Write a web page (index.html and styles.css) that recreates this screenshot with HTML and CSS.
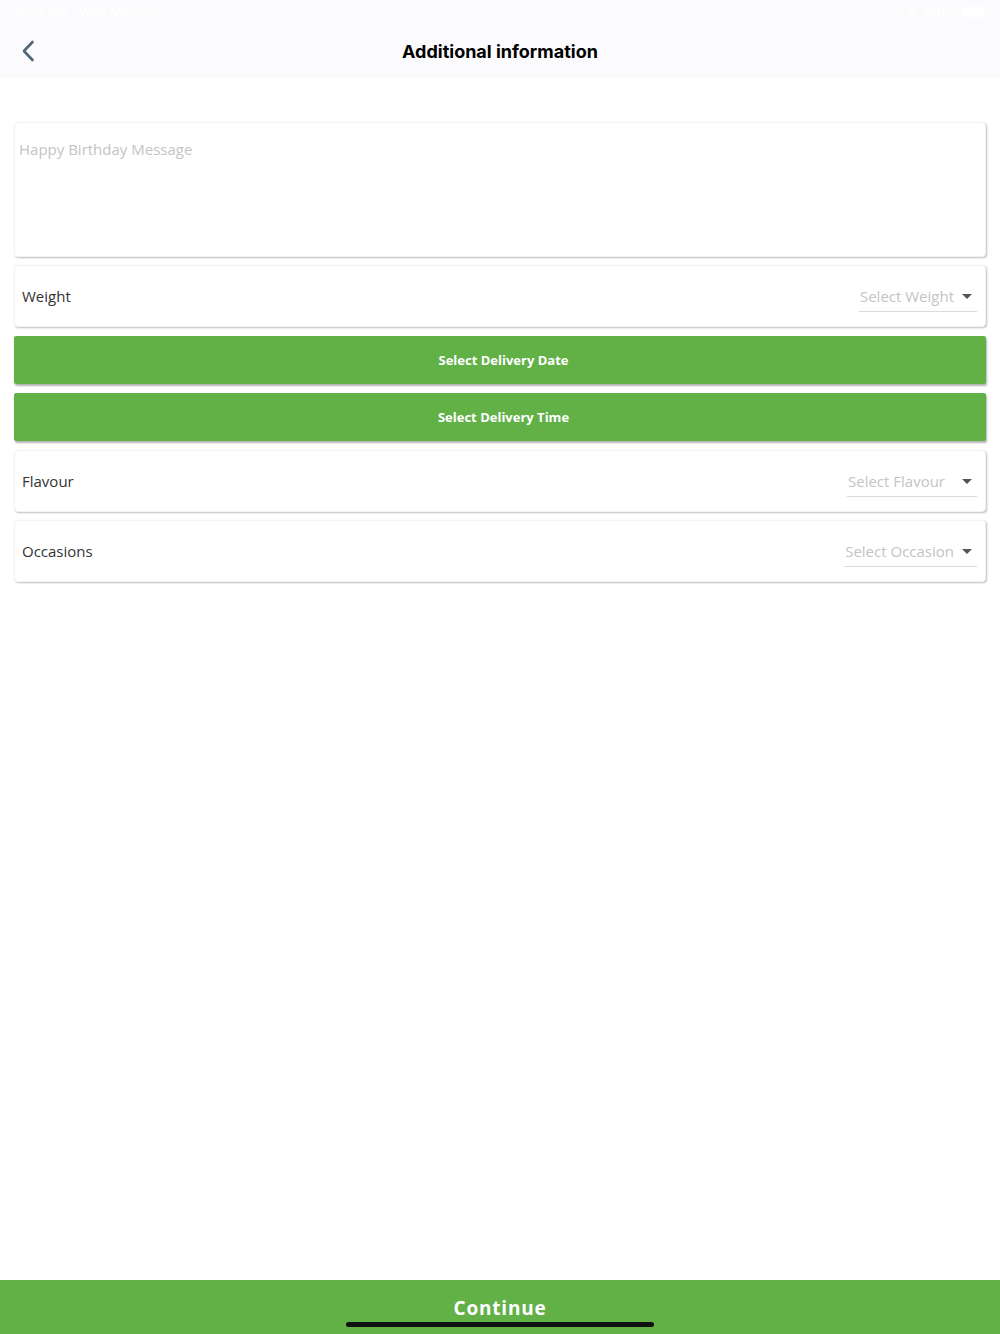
FILE: index.html
```html
<!DOCTYPE html>
<html lang="en">

<head>
  <meta charset="UTF-8">
  <meta name="viewport" content="width=device-width, initial-scale=1.0">
  <title>Additional information</title>
  <link rel="stylesheet" href="styles.css">
</head>

<body>
  <div class="app">
    <div class="topbar">
      <div class="status">
        <span>9:02 PM&nbsp;&nbsp;&nbsp;Wed May 20</span>
        <span class="status-right">
          <svg width="14" height="10" viewBox="0 0 14 10"><path d="M7 9.5 L4.6 7 A3.4 3.4 0 0 1 9.4 7 Z M2.6 5 A6.2 6.2 0 0 1 11.4 5 L10.2 6.2 A4.5 4.5 0 0 0 3.8 6.2 Z M0.6 3 A9 9 0 0 1 13.4 3 L12.2 4.2 A7.3 7.3 0 0 0 1.8 4.2 Z" fill="#fff"/></svg>
          100%
          <span class="battery"></span>
        </span>
      </div>
      <div class="header">
        <svg class="back" width="14" height="22" viewBox="0 0 14 22"><path d="M11.5 2 L3 11 L11.5 20" fill="none" stroke="#4f6675" stroke-width="2.6" stroke-linecap="round" stroke-linejoin="round"/></svg>
        <div class="title">Additional information</div>
      </div>
    </div>

    <div class="form">
      <div class="card message">Happy Birthday Message</div>

      <div class="card row">
        <div class="label">Weight</div>
        <div class="select">Select Weight<span class="caret"></span></div>
      </div>

      <div class="btn">Select Delivery Date</div>
      <div class="btn">Select Delivery Time</div>

      <div class="card row after-btn">
        <div class="label">Flavour</div>
        <div class="select">Select Flavour<span class="caret wide"></span></div>
      </div>

      <div class="card row">
        <div class="label">Occasions</div>
        <div class="select">Select Occasion<span class="caret"></span></div>
      </div>
    </div>

    <div class="footer">
      <div class="continue">Continue</div>
      <div class="home-bar"></div>
    </div>
  </div>
</body>

</html>
```

FILE: styles.css
```css
body {
  margin: 0;
  font-family: "Open Sans", "Noto Sans", sans-serif;
  background: #fff;
}

.app {
  height: 1334px;
  display: flex;
  flex-direction: column;
}

.topbar {
  background-color: #fbfbfd;
  height: 78px;
}

.status {
  height: 24px;
  display: flex;
  justify-content: space-between;
  align-items: center;
  padding: 0 16px;
  font-family: Inter, sans-serif;
  font-size: 13px;
  font-weight: 500;
  color: #fff;
}

.status-right {
  display: flex;
  align-items: center;
  gap: 4px;
}

.battery {
  display: inline-block;
  width: 22px;
  height: 10px;
  border-radius: 2px;
  background: #fff;
}

.header {
  height: 54px;
  display: flex;
  align-items: center;
  justify-content: center;
  position: relative;
}

.back {
  position: absolute;
  left: 21px;
  top: 16px;
}

.title {
  font-family: Inter, "Liberation Sans", sans-serif;
  font-weight: 700;
  font-size: 18px;
  color: #000;
}

.form {
  flex: 1;
  padding: 44px 14px 0 14px;
  display: flex;
  flex-direction: column;
  gap: 8px;
}

.card {
  background: #fff;
  border-radius: 4px;
  box-shadow: 1px 1px 2px rgba(0, 0, 0, 0.25);
  border: 1px solid #f3f3f3;
  box-sizing: border-box;
}

.message {
  height: 135px;
  padding: 16px 4px;
  font-size: 15px;
  color: #c4c4c4;
}

.row {
  height: 62px;
  display: flex;
  justify-content: space-between;
  align-items: center;
  padding: 0 8px 0 7px;
}

.label {
  font-size: 15px;
  color: #333;
}

.select {
  display: flex;
  align-items: center;
  font-size: 15px;
  color: #c4c4c4;
  border-bottom: 1px solid #dcdcdc;
  padding: 5px 5px 5px 1px;
  margin-top: 1px;
}

.caret {
  width: 0;
  height: 0;
  border-left: 5px solid transparent;
  border-right: 5px solid transparent;
  border-top: 5px solid #555;
  margin-left: 8px;
}

.caret.wide {
  margin-left: 17px;
}

.btn {
  height: 48px;
  margin-top: 1px;
  background-color: #62b147;
  border-radius: 2px;
  box-shadow: 1px 2px 2px rgba(0, 0, 0, 0.3);
  color: #fff;
  font-weight: 700;
  font-size: 13px;
  display: flex;
  align-items: center;
  justify-content: center;
  padding-left: 7px;
}

.after-btn {
  margin-top: 1px;
}

.footer {
  height: 54px;
  background-color: #62b147;
  position: relative;
  display: flex;
  justify-content: center;
}

.continue {
  color: #fff;
  font-weight: 700;
  font-size: 19px;
  letter-spacing: 0.8px;
  margin-top: 15px;
}

.home-bar {
  position: absolute;
  left: 346px;
  bottom: 7px;
  width: 308px;
  height: 5px;
  border-radius: 3px;
  background: #111;
}
```
